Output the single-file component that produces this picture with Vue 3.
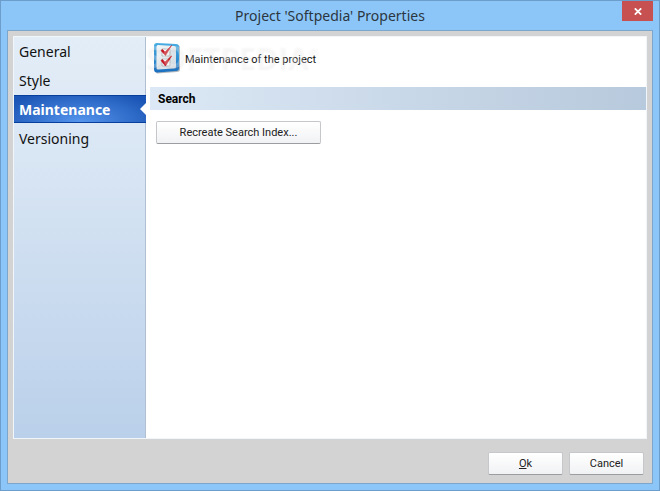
<script setup>
import { ref } from 'vue'

const sections = ['General', 'Style', 'Maintenance', 'Versioning']
const current = ref('Maintenance')
</script>

<template>
  <div class="window" role="dialog" aria-labelledby="window-title">
    <header class="titlebar">
      <h1 id="window-title">Project 'Softpedia' Properties</h1>
      <button class="close" type="button" aria-label="Close">
        <svg width="8" height="7" viewBox="0 0 8 7" aria-hidden="true">
          <path d="M.8 .3 7.200 6.700M7.200 .3 .8 6.700" stroke="#fff" stroke-width="1.7" />
        </svg>
      </button>
    </header>

    <div class="client">
      <div class="panel">
        <nav class="sidebar">
          <button
            v-for="name in sections"
            :key="name"
            type="button"
            class="tab"
            :class="{ active: name === current }"
            @click="current = name"
          >{{ name }}</button>
        </nav>

        <main class="content">
          <div class="intro">
            <svg class="icon" width="28" height="32" viewBox="0 0 28 32" aria-hidden="true">
              <defs>
                <linearGradient id="frame" x1="0" y1="0" x2="0" y2="1">
                  <stop offset="0" stop-color="#49aee2" />
                  <stop offset="1" stop-color="#1a6fc0" />
                </linearGradient>
                <linearGradient id="sheet" x1="0" y1="0" x2="1" y2="1">
                  <stop offset="0" stop-color="#f4f8fa" />
                  <stop offset="1" stop-color="#cfd8df" />
                </linearGradient>
              </defs>
              <path d="M4 2 24 3Q27 3 27 6V27Q27 30 24 30L4 31.500Q2 31 2 28V5Q2 2 4 2Z" fill="#7f8991" opacity=".6" />
              <path d="M4 1 23 2Q26 2 26 5V26Q26 29 23 29L4 30.500Q1 30.500 1 27V4Q1 1 4 1Z" fill="url(#frame)" />
              <path d="M5 3 21 4Q23 4 23 6V25Q23 26.500 21 26.500L5 27.500Q3.500 27.500 3.500 26V5Q3.500 3 5 3Z" fill="url(#sheet)" />
              <path d="M9 7h8v7H9zM9 17h8v7H9z" fill="#f7f8f8" stroke="#b4b9bd" />
              <path d="M8 8.500 9.500 7.500 12 10 18.500 3.500 12.500 13.500ZM8 18.500 9.500 17.500 12 20 18.500 14 12.500 24Z" fill="#c9161f" stroke="#c9161f" stroke-width=".7" stroke-linejoin="round" />
            </svg>
            <p>Maintenance of the project</p>
            <span class="watermark" aria-hidden="true">SOFTPEDIA<sup>®</sup></span>
          </div>
          <h2>Search</h2>
          <button class="push recreate" type="button">Recreate Search Index...</button>
        </main>
      </div>

      <footer class="actions">
        <button class="push" type="button"><u>O</u>k</button>
        <button class="push" type="button">Cancel</button>
      </footer>
    </div>
  </div>
</template>

<style>
body {
  margin: 0;
}
</style>

<style scoped>
* {
  box-sizing: border-box;
}

button {
  margin: 0;
  font-family: inherit;
}

.window {
  display: flex;
  flex-direction: column;
  min-height: 100vh;
  padding: 0 6px 6px;
  border: 1px solid #6c9dcb;
  background: #8cc6f9;
  color: #111;
  font: 11px/16px Roboto, "Liberation Sans", sans-serif;
}

.titlebar {
  position: relative;
  height: 29px;
}

h1 {
  margin: 0;
  color: #2b3640;
  font: 14px/30px "Noto Sans", "Open Sans", sans-serif;
  text-align: center;
}

.close {
  position: absolute;
  top: 0;
  right: 0;
  display: flex;
  align-items: center;
  justify-content: center;
  width: 31px;
  height: 20px;
  padding: 0;
  border: 0;
  background: #c75050;
}

.client {
  display: flex;
  flex: 1;
  flex-direction: column;
  padding: 5px;
  border: 1px solid #7da6cd;
  background: #d3d3d3;
}

.panel {
  display: flex;
  flex: 1;
  border: 1px solid #f1f6fb;
  background: #fff;
}

.sidebar {
  display: flex;
  flex-direction: column;
  width: 132px;
  gap: 1px;
  background: linear-gradient(#e3edf7, #d9e6f4 30%, #bad0ea);
  box-shadow: inset -1px 0 #b1bfd2;
}

.tab {
  position: relative;
  height: 28px;
  padding: 2px 5px 0;
  border: 1px solid transparent;
  border-width: 1px 0;
  background: none;
  color: #111;
  font: 14px/24px "Noto Sans", "Open Sans", sans-serif;
  text-align: left;
}

.tab.active {
  border-color: #073f9c;
  background: radial-gradient(ellipse at 50% 100%, #5595ed, #1b55b5 90%);
  color: #fff;
  font-weight: bold;
}

.tab.active::after {
  content: "";
  position: absolute;
  top: 7px;
  right: 0;
  border: 6px solid transparent;
  border-right-color: #fff;
  border-left: 0;
}

.content {
  flex: 1;
  padding: 0 0 0 4px;
}

.intro {
  position: relative;
  display: flex;
  align-items: center;
  height: 50px;
  padding: 0 3px;
  gap: 4px;
}

.icon {
  margin-bottom: 8px;
}

.intro p {
  margin: 0 0 4px;
}

.watermark {
  position: absolute;
  top: 4px;
  left: -5px;
  color: rgba(255, 255, 255, 0.25);
  font: bold 30px/32px "Open Sans", sans-serif;
  text-shadow: 1px 2px 2px rgba(110, 110, 110, 0.07);
  pointer-events: none;
}

.watermark sup {
  font-size: 12px;
  line-height: 12px;
  vertical-align: 12px;
}

h2 {
  margin: 0;
  padding: 1px 8px 0;
  background: linear-gradient(90deg, #dce8f5, #b7c9dc);
  color: #000;
  font-size: 12px;
  line-height: 22px;
}

.push {
  width: 75px;
  height: 23px;
  padding: 1px 0 0;
  border: 1px solid #c5c7ca;
  border-bottom-color: #9b9da0;
  border-radius: 2px;
  background: linear-gradient(#fff, #f1f2f4);
  color: #222;
  font-size: 11px;
  line-height: 20px;
}

.recreate {
  width: 165px;
  margin: 11px 6px;
}

.actions {
  display: flex;
  justify-content: flex-end;
  gap: 6px;
  padding: 13px 3px 3px;
}
</style>
